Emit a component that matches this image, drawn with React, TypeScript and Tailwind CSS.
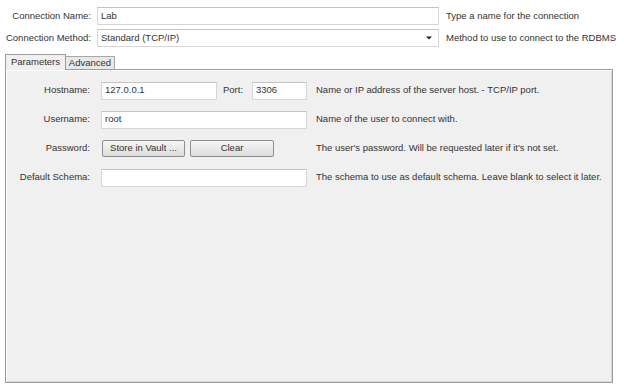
import React from "react";

const font = { fontFamily: '"Liberation Sans", Arial, sans-serif' };

function TopRow({ label, children, hint }: { label: string; children: React.ReactNode; hint: string }) {
  return (
    <div className="flex items-center h-[22px]">
      <div className="w-[91px] text-right">{label}</div>
      <div className="ml-[6px]">{children}</div>
      <div className="ml-[7px]">{hint}</div>
    </div>
  );
}

function Field({ w, value }: { w: string; value?: string }) {
  return (
    <div className={`${w} h-[18px] bg-white border border-[#d6d6d6] border-t-[#c4c4c4] flex items-center px-[3px]`}>
      {value}
    </div>
  );
}

function ParamRow({ label, children, hint }: { label: string; children: React.ReactNode; hint: string }) {
  return (
    <div className="flex items-center h-[29px]">
      <div className="w-[84px] text-right">{label}</div>
      <div className="ml-[11px] flex items-center w-[206px]">{children}</div>
      <div className="ml-[9px]">{hint}</div>
    </div>
  );
}

function Btn({ w, label }: { w: string; label: string }) {
  return (
    <div
      className={`${w} h-[17px] rounded-[2px] border border-[#8e8e8e] bg-gradient-to-b from-[#f6f6f6] to-[#dcdcdc] flex items-center justify-center`}
    >
      {label}
    </div>
  );
}

export default function App() {
  return (
    <div className="w-[624px] h-[390px] bg-white text-[#333333] text-[9.5px] overflow-hidden" style={font}>
      <div className="pt-[5px]">
        <TopRow label="Connection Name:" hint="Type a name for the connection">
          <Field w="w-[342px]" value="Lab" />
        </TopRow>
        <TopRow label="Connection Method:" hint="Method to use to connect to the RDBMS">
          <div className="w-[342px] h-[18px] bg-white border border-[#d6d6d6] border-t-[#c4c4c4] flex items-center justify-between px-[3px]">
            <span>Standard (TCP/IP)</span>
            <svg width="6" height="4" viewBox="0 0 6 4" className="mr-[3px]">
              <path d="M0 0.5 L6 0.5 L3 3.5 Z" fill="#222" />
            </svg>
          </div>
        </TopRow>
      </div>

      {/* tabs */}
      <div className="flex items-end ml-[5px] mt-[4px] h-[16px]">
        <div className="w-[61px] h-[16px] border border-b-0 border-[#9c9c9c] bg-[#f0f0f0] flex items-center justify-center relative z-10 translate-y-[1px]">
          Parameters
        </div>
        <div className="w-[49px] h-[13px] border border-l-0 border-b-0 border-[#a8a8a8] bg-[#e8e8e8] flex items-center justify-center">
          Advanced
        </div>
      </div>

      {/* panel */}
      <div className="ml-[5px] w-[608px] h-[314px] border border-[#9c9c9c] bg-[#f0f0f0] shadow-[inset_1px_1px_0_#ffffff,inset_-1px_-1px_0_#d8d8d8] pt-[6px]">
        <ParamRow label="Hostname:" hint="Name or IP address of the server host. - TCP/IP port.">
          <Field w="w-[116px]" value="127.0.0.1" />
          <span className="ml-[6px]">Port:</span>
          <div className="ml-auto">
            <Field w="w-[55px]" value="3306" />
          </div>
        </ParamRow>
        <ParamRow label="Username:" hint="Name of the user to connect with.">
          <Field w="w-[206px]" value="root" />
        </ParamRow>
        <ParamRow label="Password:" hint="The user's password. Will be requested later if it's not set.">
          <div className="ml-[1px]">
            <Btn w="w-[83px]" label="Store in Vault ..." />
          </div>
          <div className="ml-[5px]">
            <Btn w="w-[84px]" label="Clear" />
          </div>
        </ParamRow>
        <ParamRow label="Default Schema:" hint="The schema to use as default schema. Leave blank to select it later.">
          <Field w="w-[206px]" />
        </ParamRow>
      </div>
    </div>
  );
}
